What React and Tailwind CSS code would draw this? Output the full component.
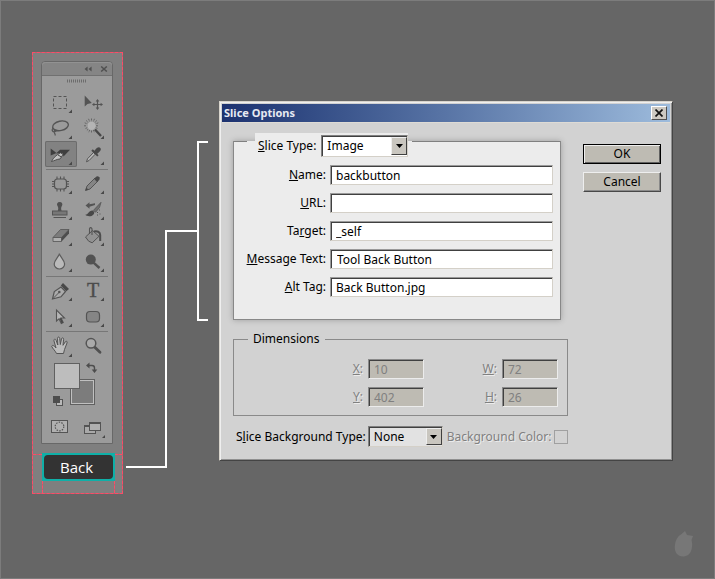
import React from "react";

const INK = "#545454";

function Corner() {
  return <path d="M27 20.5V24H23.5Z" fill="#484848" />;
}

const icons = {
  marquee: (
    <>
      <rect x="8.5" y="7.5" width="13" height="12" fill="none" stroke={INK} strokeDasharray="3 2" />
      <Corner />
    </>
  ),
  move: (
    <>
      <path d="M7.7 6.5V17.5L10.5 15L14.8 14Z" fill={INK} />
      <path d="M20.5 11V20M16 15.5H25" stroke={INK} strokeWidth="1.2" />
      <path d="M20.5 10L22.3 12.4H18.7ZM20.5 21L22.3 18.6H18.7ZM15 15.5L17.4 13.7V17.3ZM26 15.5L23.6 13.7V17.3Z" fill={INK} />
    </>
  ),
  lasso: (
    <>
      <ellipse cx="15.5" cy="10.8" rx="8" ry="4.7" transform="rotate(-12 15.5 10.8)" fill="none" stroke={INK} strokeWidth="1.4" />
      <path d="M8 13C6 15.5 8 17.5 10.5 16.5C12.5 15.5 10 14 9.2 16C8.6 18 10.5 18 10.2 20.5" fill="none" stroke={INK} strokeWidth="1.2" />
      <Corner />
    </>
  ),
  wand: (
    <>
      <path d="M14.5 3.5V18M7 10.8H22M9.2 5.5L19.8 16.1M19.8 5.5L9.2 16.1M11.5 3.8L17.5 17.8M17.5 3.8L11.5 17.8M7.7 7.8L21.3 13.8M21.3 7.8L7.7 13.8" stroke="#5f5f5f" strokeWidth="0.9" strokeDasharray="2 1" />
      <circle cx="14.5" cy="10.8" r="4.2" fill="#b4b4b4" />
      <path d="M18 14.5L24 21" stroke="#484848" strokeWidth="2.4" />
      <Corner />
    </>
  ),
  slice: (
    <>
      <path d="M5.7 7.5V14.6L11.5 12Z" fill="#3f3f3f" />
      <path d="M11 12.6L15 8.8H25L18.5 15.5L17.5 12Z" fill="#3f3f3f" />
      <path d="M6.5 20.5C8 17 12 13.5 15.6 11.8L18 13.5L15 18C12 18 9 20 6.5 20.5Z" fill="#c2c2c2" stroke="#474747" strokeWidth="0.9" />
      <path d="M13 14L16.5 16" stroke="#474747" />
      <Corner />
    </>
  ),
  eyedropper: (
    <>
      <path d="M9.5 20.8L10.5 17.8L16.5 11.5L18.2 13.2L12.2 19.4Z" fill="#b9b9b9" stroke={INK} strokeWidth="1" />
      <path d="M14.3 9.7L20.3 15.6L21.6 14.2L20.2 12.7C24 9.8 24.4 8.3 23.3 7C22 5.6 20 6.2 17.4 9.8L15.8 8.3Z" fill="#484848" />
      <Corner />
    </>
  ),
  patch: (
    <>
      <path d="M12 6.5V9M15.5 6.5V9M19 6.5V9M12 19V21.5M15.5 19V21.5M19 19V21.5M7 11.5H9M7 14H9M7 16.5H9M21.5 11.5H24M21.5 14H24M21.5 16.5H24" stroke={INK} strokeWidth="1.1" />
      <rect x="9.5" y="9" width="12" height="10" rx="3" fill="#999" stroke={INK} strokeWidth="1.2" />
      <Corner />
    </>
  ),
  pencil: (
    <>
      <path d="M8.5 20.5L10 16L18 8L21 11L13 19Z" fill="#858585" stroke={INK} strokeWidth="1" />
      <path d="M17 8.8L19.5 6.5Q21 5.8 22.3 7.2Q23.3 8.8 22.2 10L20 12Z" fill="#484848" />
      <path d="M8.5 20.5L9.4 17.7L11.5 19.6Z" fill="#484848" />
      <Corner />
    </>
  ),
  stamp: (
    <>
      <path d="M14.7 6C17 6 18 8 17 9.7C15.8 11.5 16 13 16.7 15H12.7C13.4 13 13.6 11.5 12.4 9.7C11.4 8 12.4 6 14.7 6Z" fill="#505050" />
      <rect x="7.5" y="15" width="14.5" height="4" fill="#777" stroke={INK} />
      <path d="M8.5 21.5H21" stroke={INK} />
      <Corner />
    </>
  ),
  history: (
    <>
      <path d="M8.5 9.5L12.5 6.3V8.3L18 7.3V9L12.5 10.7V12.7Z" fill={INK} />
      <path d="M24 6.3L16.5 14.3L18.5 16.3L22.5 11.5Z" fill="#707070" stroke={INK} strokeWidth="0.8" />
      <path d="M8.3 18.8C11.8 18.5 11.5 14.3 15.6 14.5C18.8 16 17 19.8 13.3 20.2C11.2 20.4 9.4 20 8.3 18.8Z" fill="#484848" />
      <path d="M20 16.5h1M22 14h1M20 19h1M22.5 18h1" stroke={INK} />
      <Corner />
    </>
  ),
  eraser: (
    <>
      <path d="M8 15.5L15.5 7.5H24L16.5 15.5Z" fill="#7c7c7c" stroke={INK} strokeWidth="0.8" />
      <path d="M8 15.5H16.5V19.5H8Z" fill="#b0b0b0" stroke={INK} strokeWidth="0.8" />
      <path d="M16.5 15.5L24 7.5V11.5L16.5 19.5Z" fill="#4d4d4d" />
      <Corner />
    </>
  ),
  bucket: (
    <>
      <path d="M8.5 15L15.5 8.5L22 14.3L15.2 20.8Q11.5 20.5 8.5 15Z" fill="#929292" stroke={INK} />
      <path d="M12.5 12V6.7Q13.5 4.5 15 6.7V13" fill="none" stroke={INK} strokeWidth="1.1" />
      <path d="M17 9.5C20 8.5 23.2 10 23.2 13V19" fill="none" stroke="#4d4d4d" strokeWidth="2" />
      <Corner />
    </>
  ),
  drop: (
    <>
      <path d="M14.4 5.5C15 9 19.6 12 19.6 16A5.2 5 0 0 1 9.2 16C9.2 12 13.8 9 14.4 5.5Z" fill="#bababa" stroke="#5c5c5c" strokeWidth="1.2" />
      <Corner />
    </>
  ),
  dodge: (
    <>
      <circle cx="13.8" cy="11.6" r="5" fill="#525252" />
      <path d="M16.8 14.8L22.5 20" stroke="#525252" strokeWidth="2.4" />
      <Corner />
    </>
  ),
  pen: (
    <>
      <path d="M7.5 22L9.3 14.5L16 10L20.5 14.5L16 19.8Z" fill="#aaa" stroke={INK} strokeWidth="1.2" />
      <path d="M7.5 22L14 15.5" stroke={INK} />
      <circle cx="14.3" cy="15" r="1.3" fill={INK} />
      <path d="M15.8 8.5L18 6L24 12L21.3 14.3Z" fill="#484848" />
      <Corner />
    </>
  ),
  type: (
    <>
      <text x="16" y="20" textAnchor="middle" fontFamily="Liberation Serif, serif" fontSize="20" fill="#4c4c4c" stroke="#4c4c4c" strokeWidth="0.4">T</text>
      <Corner />
    </>
  ),
  arrow: (
    <>
      <path d="M11.5 7V18L14 15.8L16.3 20.5L18.2 19.6L16 15H19.5Z" fill="#b5b5b5" stroke={INK} strokeWidth="1.1" />
      <path d="M14.5 15.5L16.5 20.5L18.2 19.6L16 15Z" fill="#484848" />
      <Corner />
    </>
  ),
  shape: (
    <>
      <rect x="9.5" y="8.5" width="13" height="10.5" rx="3.5" fill="#858585" stroke={INK} strokeWidth="1.2" />
      <Corner />
    </>
  ),
  hand: (
    <>
      <path d="M11.5 20.5C10.5 18 7.5 15.5 6.7 13.3C7.3 11.8 9 12.4 11 15L9 8C8.6 5.8 10.6 5.5 11.2 7.5L12.8 12L12.5 5.3C12.6 3.6 14.5 3.6 14.7 5.3L15.3 11.5L16.5 5.8C17 4.2 18.8 4.7 18.6 6.3L18 12.3L20.3 8.8C21.4 7.6 22.6 8.5 22 10L19.5 16.5L18.5 20.5Z" fill="#bcbcbc" stroke={INK} />
      <Corner />
    </>
  ),
  zoom: (
    <>
      <path d="M17.5 14L23 19.3" stroke="#505050" strokeWidth="2.8" strokeLinecap="round" />
      <circle cx="14" cy="10.3" r="4.8" fill="#aaa" stroke={INK} strokeWidth="1.5" />
    </>
  ),
};

function Tool({ name, label, active }) {
  return (
    <button
      type="button"
      aria-label={label}
      className={
        active
          ? "h-[26px] w-8 rounded-xs bg-[#828282] shadow-[inset_0_0_0_1px_#6c6c6c]"
          : "h-[26px] w-8"
      }
    >
      <svg className="block" width="32" height="26" viewBox="0 0 32 26">
        {icons[name]}
      </svg>
    </button>
  );
}

function ToolGroup({ tools }) {
  return (
    <div className="grid grid-cols-[32px_32px] justify-center">
      {tools.map(([name, label, active]) => (
        <Tool key={name} name={name} label={label} active={active} />
      ))}
    </div>
  );
}

function Divider() {
  return (
    <div className="flex h-[3px] items-end px-1">
      <div className="h-px flex-1 bg-[#777777]" />
    </div>
  );
}

function ToolPanel() {
  return (
    <div className="mr-[9px] ml-2 rounded-t border border-[#686868] bg-[#9b9b9b]">
      <div className="flex h-[13px] items-center justify-end gap-2 rounded-t bg-[#858585] px-1 shadow-[inset_0_1px_0_#929292]">
        <button type="button" aria-label="Collapse panel">
          <svg className="block" width="8" height="6" viewBox="0 0 8 6">
            <path d="M3.6 0.5V5.5L0.5 3ZM7.6 0.5V5.5L4.5 3Z" fill="#505050" />
          </svg>
        </button>
        <button type="button" aria-label="Close panel">
          <svg className="block" width="8" height="6" viewBox="0 0 8 6">
            <path d="M1.2 0.5L6.8 5.5M6.8 0.5L1.2 5.5" stroke="#505050" strokeWidth="1.5" />
          </svg>
        </button>
      </div>
      <div className="flex h-[14px] justify-center border-t border-[#707070] pt-[3px]">
        <svg width="20" height="4" viewBox="0 0 20 4">
          <path d="M0 2H20" stroke="#6c6c6c" strokeWidth="3" strokeDasharray="1 1" />
        </svg>
      </div>
      <ToolGroup
        tools={[
          ["marquee", "Marquee"],
          ["move", "Move"],
          ["lasso", "Lasso"],
          ["wand", "Magic wand"],
          ["slice", "Slice select", true],
          ["eyedropper", "Eyedropper"],
        ]}
      />
      <Divider />
      <ToolGroup
        tools={[
          ["patch", "Patch"],
          ["pencil", "Pencil"],
          ["stamp", "Clone stamp"],
          ["history", "History brush"],
          ["eraser", "Eraser"],
          ["bucket", "Paint bucket"],
          ["drop", "Blur"],
          ["dodge", "Dodge"],
        ]}
      />
      <Divider />
      <ToolGroup
        tools={[
          ["pen", "Pen"],
          ["type", "Type"],
          ["arrow", "Path selection"],
          ["shape", "Rounded rectangle"],
        ]}
      />
      <Divider />
      <div className="pt-px">
        <ToolGroup
          tools={[
            ["hand", "Hand"],
            ["zoom", "Zoom"],
          ]}
        />
      </div>
      <button type="button" aria-label="Foreground and background colors" className="block w-full">
        <svg className="mx-auto block" width="70" height="53" viewBox="0 0 70 53">
          <rect x="28.5" y="20.5" width="24" height="25" fill="#7c7c7c" stroke="#606060" />
          <rect x="29.5" y="21.5" width="22" height="23" fill="#7c7c7c" stroke="#c0c0c0" />
          <rect x="12.5" y="4.5" width="25" height="25" fill="#bdbdbd" stroke="#606060" />
          <path d="M47 6.5H50Q52.5 6.5 52.5 9V11" fill="none" stroke="#4d4d4d" strokeWidth="1.4" />
          <path d="M44 6.5L47.5 3.5V9.5ZM52.5 14L49.7 10.5H55.3Z" fill="#4d4d4d" />
          <rect x="14.5" y="40.5" width="6" height="6" fill="#b8b8b8" stroke={INK} />
          <rect x="11" y="37" width="7" height="7" fill="#4d4d4d" />
        </svg>
      </button>
      <div className="grid h-[31px] grid-cols-[32px_32px] justify-center">
        <button type="button" aria-label="Quick mask">
          <svg className="block" width="32" height="26" viewBox="0 0 32 26">
            <rect x="6.5" y="5.5" width="16" height="12" fill="#b0b0b0" stroke={INK} />
            <circle cx="14.5" cy="11.5" r="4.3" fill="none" stroke={INK} strokeWidth="1.2" strokeDasharray="1.5 1.2" />
          </svg>
        </button>
        <button type="button" aria-label="Screen mode">
          <svg className="block" width="32" height="26" viewBox="0 0 32 26">
            <rect x="7.5" y="10.5" width="11" height="8" fill="#a9a9a9" stroke={INK} />
            <path d="M7 11H19" stroke={INK} strokeWidth="2" />
            <rect x="12.5" y="7.5" width="11" height="8" fill="#b0b0b0" stroke={INK} />
            <path d="M12 8H24" stroke={INK} strokeWidth="2" />
            <path d="M28 20V23H25Z" fill="#484848" />
          </svg>
        </button>
      </div>
    </div>
  );
}

function SlicedLayout() {
  return (
    <section className="w-[91px] shrink-0 border border-dashed border-[#fb4d68] bg-[#c95a6b]">
      <div className="bg-[#7f7f7f] pt-2">
        <ToolPanel />
        <div className="mt-[9px] flex">
          <div className="mt-px h-px w-[9px] border-t border-dashed border-[#fb4d68] bg-[#c95a6b]" />
          <button
            type="button"
            className="h-7 flex-1 border border-[#0fb0a8] bg-[#0fb0a8] p-px font-['Open_Sans','Noto_Sans',sans-serif] text-[15px] text-white"
          >
            <span className="flex h-full items-center justify-center rounded-sm bg-[#333333] pr-1">Back</span>
          </button>
          <div className="mt-px h-px w-[7px] border-t border-dashed border-[#fb4d68] bg-[#c95a6b]" />
        </div>
        <div className="mr-[7px] ml-[9px] border-x border-dashed border-[#fb4d68] bg-[#c95a6b]">
          <div className="h-3 bg-[#7f7f7f]" />
        </div>
      </div>
    </section>
  );
}

const sunken =
  "h-5 w-full min-w-0 rounded-none border border-t-[#9a9a9a] border-r-[#d4d0c8] border-b-[#d4d0c8] border-l-[#9a9a9a] bg-white shadow-[inset_1px_1px_0_#404040]";

function Field({ id, label, value, indent }) {
  return (
    <>
      <label htmlFor={id} className="text-right whitespace-nowrap">
        {label}
      </label>
      <input id={id} type="text" defaultValue={value} className={`${sunken} ${indent ? "pl-1.5" : "pl-[5px]"}`} />
    </>
  );
}

function SizeField({ id, label, value }) {
  return (
    <>
      <label htmlFor={id} className="text-right text-[#808080] [text-shadow:1px_1px_0_#ececec]">
        <u>{label}</u>:
      </label>
      <input
        id={id}
        type="text"
        disabled
        defaultValue={value}
        className="h-5 w-full min-w-0 border border-t-[#8a8a8a] border-r-[#ececec] border-b-[#ececec] border-l-[#8a8a8a] bg-[#bebbb3] pl-[5px] text-[#808080] shadow-[inset_1px_1px_0_#404040]"
      />
    </>
  );
}

function Dropdown({ id, options, box }) {
  return (
    <div className={`relative border border-t-[#808080] border-r-[#d4d0c8] border-b-[#d4d0c8] border-l-[#808080] p-px shadow-[inset_1px_1px_0_#404040] ${box}`}>
      <select id={id} className="block h-full w-full appearance-none rounded-none bg-transparent pl-1 outline-none">
        {options.map((o) => (
          <option key={o}>{o}</option>
        ))}
      </select>
      <span className="pointer-events-none absolute inset-y-px right-0 flex w-4 items-center justify-center border border-t-[#eeeeee] border-r-[#404040] border-b-[#404040] border-l-[#eeeeee] bg-[#c9c6bf]">
        <svg width="7" height="4" viewBox="0 0 7 4">
          <path d="M0 0H7L3.5 4Z" fill="#000" />
        </svg>
      </span>
    </div>
  );
}

function SliceOptions() {
  return (
    <section
      role="dialog"
      aria-labelledby="dialog-title"
      className="mt-[49px] ml-[11px] min-w-0 flex-1 border border-t-[#d8d4cc] border-r-[#444444] border-b-[#444444] border-l-[#d8d4cc] bg-[#d2d2d2] p-[2px] font-['Noto_Sans',sans-serif] text-xs leading-4 text-black shadow-[inset_1px_1px_0_#efefef,inset_-1px_-1px_0_#909090]"
    >
      <header className="flex h-[18px] items-center justify-between bg-linear-to-r from-[#1d3270] to-[#9dbbdc] pr-[3px] pl-[2px]">
        <h1 id="dialog-title" className="text-[11px] font-bold text-[#e6e9f2]">
          Slice Options
        </h1>
        <button
          type="button"
          aria-label="Close"
          className="flex h-[14px] w-4 items-center justify-center border border-t-white border-r-[#505050] border-b-[#505050] border-l-white bg-[#cdc9c2]"
        >
          <svg width="8" height="8" viewBox="0 0 8 8">
            <path d="M0.5 0.5L7.5 7.5M7.5 0.5L0.5 7.5" stroke="#111" strokeWidth="1.7" />
          </svg>
        </button>
      </header>

      <form className="border-t border-[#dedbd5] pt-[18px] pr-[9px] pb-[11px] pl-[11px]" onSubmit={(e) => e.preventDefault()}>
        <div className="flex items-start gap-[22px]">
          <div className="flex-1 border-x border-b border-[#888888] bg-[#ececec] pb-[22px] shadow-[0_0_6px_rgba(0,0,0,0.25)]">
            <div className="-mt-2 flex items-start">
              <div className="mt-2 w-[13px] border-t border-[#808080]" />
              <div className="w-2" />
              <div className="flex h-6 items-center gap-[5px] bg-[#ececec] pt-px">
                <label htmlFor="slice-type" className="pl-[3px]">
                  <u>S</u>lice Type:
                </label>
                <Dropdown id="slice-type" options={["Image", "No Image", "Table"]} box="h-[22px] w-[87px] bg-white" />
              </div>
              <div className="w-1" />
              <div className="mt-2 flex-1 border-t border-[#808080]" />
            </div>
            <div className="mt-2 grid grid-cols-[92px_1fr] items-center gap-x-1 gap-y-2 pr-[7px]">
              <Field id="name" label={<><u>N</u>ame:</>} value="backbutton" />
              <Field id="url" label={<><u>U</u>RL:</>} value="" />
              <Field id="target" label={<>Ta<u>r</u>get:</>} value="_self" />
              <Field id="message" label={<><u>M</u>essage Text:</>} value="Tool Back Button" indent />
              <Field id="alt" label={<><u>A</u>lt Tag:</>} value="Back Button.jpg" />
            </div>
          </div>
          <div className="mt-[3px] flex w-[78px] flex-col gap-2">
            <button
              type="submit"
              className="h-5 border border-black bg-[#bebbb3] shadow-[inset_1px_1px_0_#eeeeee,inset_-1px_-1px_0_#606060]"
            >
              <span className="block">OK</span>
            </button>
            <button
              type="button"
              className="h-5 border border-t-[#eeeeee] border-r-[#484848] border-b-[#484848] border-l-[#eeeeee] bg-[#bebbb3] shadow-[inset_-1px_-1px_0_#8a8a8a]"
            >
              <span className="block">Cancel</span>
            </button>
          </div>
        </div>

        <fieldset className="mt-[11px] mr-[93px] border border-[#8a8a8a] pb-2">
          <legend className="ml-[14px] px-[5px]">Dimensions</legend>
          <div className="mt-3 grid grid-cols-[1fr_56px_68px_56px] items-center gap-x-[5px] gap-y-2 pr-[9px]">
            <SizeField id="x" label="X" value="10" />
            <SizeField id="w" label="W" value="72" />
            <SizeField id="y" label="Y" value="402" />
            <SizeField id="h" label="H" value="26" />
          </div>
        </fieldset>

        <div className="mt-[10px] mr-[93px] flex items-center pl-[3px]">
          <label htmlFor="background-type" className="whitespace-nowrap">
            S<u>l</u>ice Background Type:
          </label>
          <div className="ml-[2px]">
            <Dropdown id="background-type" options={["None", "Matte", "White", "Black"]} box="h-[21px] w-[75px] bg-[#e2e2e2]" />
          </div>
          <label htmlFor="background-color" className="ml-1 whitespace-nowrap text-[#808080] [text-shadow:1px_1px_0_#ececec]">
            Background Color:
          </label>
          <button id="background-color" type="button" disabled aria-label="Background Color" className="ml-auto size-[14px] border border-[#a0a0a0]" />
        </div>
      </form>
    </section>
  );
}

export default function App() {
  return (
    <main className="flex min-h-screen flex-col justify-between border border-[#7c7c7c] bg-[#666666]">
      <div className="flex items-start pt-[51px] pr-[41px] pl-[31px]">
        <SlicedLayout />
        <svg className="mt-[89px] ml-[3px] shrink-0" width="82" height="328" viewBox="0 0 82 328" aria-hidden="true">
          <path d="M0 326H40V90H72M82 1H72V179H82" fill="none" stroke="#fff" strokeWidth="2" />
        </svg>
        <SliceOptions />
      </div>
      <footer className="flex justify-end pr-5 pb-[21px]">
        <svg width="20" height="26" viewBox="0 0 20 26" aria-hidden="true">
          <path d="M11 0L13 4L19 5L17.5 9C19 14 18.5 25 9.5 25.5C2 25.5 0 19 1 14C1.5 9 4 5 7 3.5L11 0Z" fill="#777777" />
        </svg>
      </footer>
    </main>
  );
}
